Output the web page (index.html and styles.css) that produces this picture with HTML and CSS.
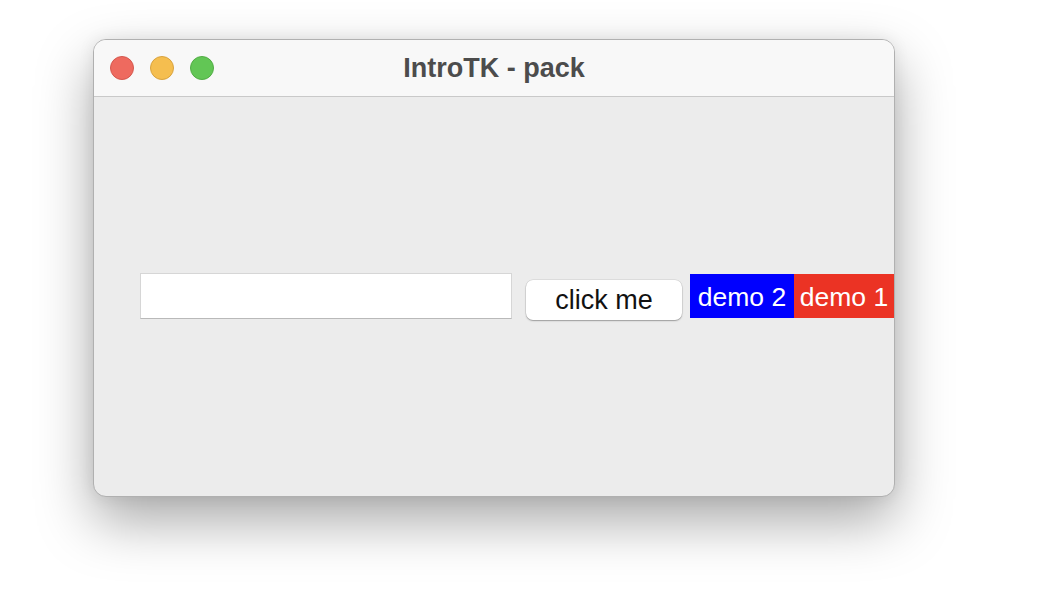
FILE: index.html
```html
<!DOCTYPE html>
<html>
<head>
<meta charset="utf-8">
<link rel="stylesheet" href="styles.css">
</head>
<body>
<div class="window">
  <div class="titlebar">
    <div class="lights">
      <span class="light red"></span>
      <span class="light yellow"></span>
      <span class="light green"></span>
    </div>
    <div class="title">IntroTK - pack</div>
  </div>
  <div class="content">
    <div class="row">
      <div class="entry"></div>
      <div class="button">click me</div>
      <div class="label blue">demo 2</div>
      <div class="label redlbl">demo 1</div>
    </div>
  </div>
</div>
</body>
</html>
```
FILE: styles.css
```css
html, body {
  margin: 0;
  padding: 0;
  background: #ffffff;
  width: 1054px;
  height: 600px;
  overflow: hidden;
  font-family: "Liberation Sans", Arial, sans-serif;
}
.window {
  margin: 39px 0 0 93px;
  width: 802px;
  height: 458px;
  box-sizing: border-box;
  border-radius: 13px;
  border: 1px solid #b0b0b0;
  background: #ececec;
  overflow: hidden;
  box-shadow: 0 24px 55px rgba(0, 0, 0, 0.34), 0 0 16px rgba(0, 0, 0, 0.08);
  display: flex;
  flex-direction: column;
}
.titlebar {
  height: 56px;
  flex: none;
  background: #f8f8f8;
  border-bottom: 1px solid #c9c9c9;
  position: relative;
  display: flex;
  align-items: center;
  justify-content: center;
}
.lights {
  position: absolute;
  left: 16px;
  top: 16px;
  display: flex;
  gap: 16px;
}
.light {
  width: 24px;
  height: 24px;
  border-radius: 50%;
  box-sizing: border-box;
}
.red { background: #ee6a5f; border: 1px solid #d5584e; }
.yellow { background: #f5be4f; border: 1px solid #d9a33f; }
.green { background: #62c655; border: 1px solid #52ad45; }
.title {
  font-weight: bold;
  font-size: 27px;
  color: #4c4c4c;
}
.content {
  flex: 1;
  padding-left: 46px;
  padding-top: 176px;
}
.row {
  display: flex;
  align-items: flex-start;
}
.entry {
  width: 372px;
  height: 46px;
  box-sizing: border-box;
  background: #ffffff;
  border: 1px solid #d6d6d6;
  border-bottom: 1px solid #b9b9b9;
}
.button {
  margin-left: 14px;
  width: 156px;
  height: 40px;
  margin-top: 7px;
  box-sizing: border-box;
  background: #ffffff;
  border-radius: 7px;
  box-shadow: 0 1px 1.5px rgba(0, 0, 0, 0.3), 0 0 0 0.5px rgba(0, 0, 0, 0.12);
  font-size: 27px;
  color: #111;
  display: flex;
  align-items: center;
  justify-content: center;
}
.label {
  height: 44px;
  margin-top: 1px;
  padding-top: 3px;
  display: flex;
  align-items: center;
  justify-content: center;
  color: #ffffff;
  font-size: 26.5px;
  box-sizing: border-box;
}
.blue {
  margin-left: 8px;
  width: 104px;
  background: #0000ff;
}
.redlbl {
  width: 100px;
  background: #eb3324;
}
```
